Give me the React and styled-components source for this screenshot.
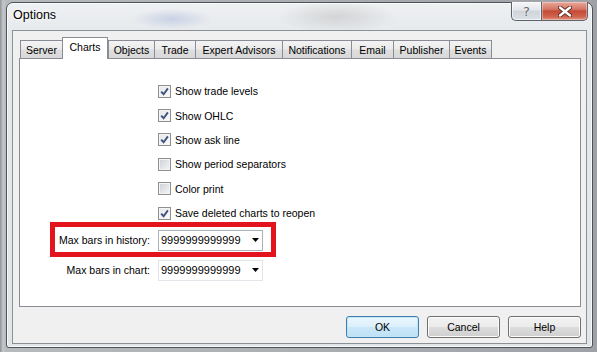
import React from "react";
import styled, { createGlobalStyle } from "styled-components";

const tabs = [
  { label: "Server", w: 42 },
  { label: "Charts", w: 46, active: true },
  { label: "Objects", w: 46 },
  { label: "Trade", w: 41 },
  { label: "Expert Advisors", w: 87 },
  { label: "Notifications", w: 69 },
  { label: "Email", w: 42 },
  { label: "Publisher", w: 56 },
  { label: "Events", w: 43, last: true },
];

const options = [
  { label: "Show trade levels", checked: true },
  { label: "Show OHLC", checked: true },
  { label: "Show ask line", checked: true },
  { label: "Show period separators", checked: false },
  { label: "Color print", checked: false },
  { label: "Save deleted charts to reopen", checked: true },
];

const limits = [
  { label: "Max bars in history:", value: "9999999999999", active: true },
  { label: "Max bars in chart:", value: "9999999999999" },
];

export default function App() {
  return (
    <>
      <GlobalStyle />
      <Window>
        <TitleBar>
          <Title>Options</Title>
          <Caption>
            <HelpBtn>?</HelpBtn>
            <CloseBtn>
              <svg width="14" height="11" viewBox="0 0 14 11">
                <path
                  d="M2 1.5 L12 9.5 M12 1.5 L2 9.5"
                  stroke="#5a2a22"
                  strokeWidth="4.2"
                  strokeLinecap="round"
                />
                <path
                  d="M2 1.5 L12 9.5 M12 1.5 L2 9.5"
                  stroke="#fff"
                  strokeWidth="2.4"
                  strokeLinecap="round"
                />
              </svg>
            </CloseBtn>
          </Caption>
        </TitleBar>

        <Client>
          <TabRow>
            {tabs.map((t) => (
              <Tab key={t.label} $w={t.w} $active={t.active} $last={t.last}>
                {t.label}
              </Tab>
            ))}
          </TabRow>

          <Panel>
            <Checks>
              {options.map((o) => (
                <CheckRow key={o.label}>
                  <Box $checked={o.checked}>
                    {o.checked && (
                      <svg width="9" height="9" viewBox="0 0 9 9">
                        <path
                          d="M1.2 4.6 L3.6 7.2 L7.9 1.4"
                          fill="none"
                          stroke="#40507f"
                          strokeWidth="1.9"
                        />
                      </svg>
                    )}
                  </Box>
                  <span>{o.label}</span>
                </CheckRow>
              ))}
            </Checks>

            {limits.map((l) => (
              <FormRow key={l.label}>
                <FieldLabel>{l.label}</FieldLabel>
                <Combo $active={l.active}>
                  <span>{l.value}</span>
                  <svg width="7" height="4" viewBox="0 0 7 4">
                    <polygon points="0,0 7,0 3.5,4" fill="#000" />
                  </svg>
                </Combo>
              </FormRow>
            ))}

            <Highlight />
          </Panel>

          <Buttons>
            <Button $default>OK</Button>
            <Button>Cancel</Button>
            <Button>Help</Button>
          </Buttons>
        </Client>
      </Window>
    </>
  );
}

/* ---------------- styled-components ---------------- */

const BORDER = "#898c95";
const FONT = `"Liberation Sans", Arial, sans-serif`;
const TEXT = "10.5px";

const GlobalStyle = createGlobalStyle`
  html, body {
    margin: 0;
    padding: 0;
  }
  body {
    width: 597px;
    height: 352px;
    overflow: hidden;
    font-family: ${FONT};
    background: linear-gradient(90deg, #8e9297 0, #c4c7ca 3px, #b7babd 6px, #9ea2a6 100%);
  }
`;

const Window = styled.div`
  margin: 2px 0 0 6px;
  width: 587px;
  height: 346px;
  box-sizing: border-box;
  border: 1px solid #4f5357;
  border-radius: 7px 7px 3px 3px;
  padding: 0 5px 3px;
  display: flex;
  flex-direction: column;
  background:
    radial-gradient(ellipse 40px 10px at 165px 16px, #c8d2e6 0%, transparent 100%),
    radial-gradient(ellipse 60px 16px at 330px 14px, #d2d4d6 0%, transparent 100%),
    linear-gradient(180deg, #eef0f2 0, #e6e9ec 30px, #e2e5e8 100%);
  box-shadow: inset 0 0 0 1px rgba(255, 255, 255, 0.75);
`;

const TitleBar = styled.div`
  height: 27px;
  display: flex;
  justify-content: space-between;
  align-items: flex-start;
`;

const Title = styled.div`
  padding: 5px 0 0 1px;
  font-size: 12.5px;
  line-height: 15px;
  color: #000;
  text-shadow: 0 0 6px #fff, 0 0 3px #fff;
`;

const Caption = styled.div`
  display: flex;
  margin-right: -1px;
  margin-top: -1px;
`;

const CaptionBtn = styled.div`
  height: 19px;
  box-sizing: border-box;
  border: 1px solid #5d636a;
  border-top: none;
  display: grid;
  place-items: center;
`;

const HelpBtn = styled(CaptionBtn)`
  width: 30px;
  border-right: none;
  border-radius: 0 0 0 5px;
  font-family: "DejaVu Sans", sans-serif;
  font-size: 13px;
  color: #62676d;
  text-shadow: 0 0 2px #fff;
  background: linear-gradient(180deg, #f5f6f8 0%, #e3e6ea 45%, #cfd4da 50%, #dce1e6 100%);
  box-shadow: inset 0 0 0 1px rgba(255, 255, 255, 0.6);
`;

const CloseBtn = styled(CaptionBtn)`
  width: 47px;
  border-radius: 0 0 5px 0;
  background: linear-gradient(180deg, #e8a79a 0%, #d67867 40%, #c44a37 50%, #cf624d 80%, #e0917c 100%);
  box-shadow: inset 0 0 0 1px rgba(255, 255, 255, 0.35);
`;

const Client = styled.div`
  flex: 1;
  border: 1px solid #8c9196;
  background: #f0f0f0;
  padding: 6px 5px 0 6px;
  display: flex;
  flex-direction: column;
`;

const TabRow = styled.div`
  height: 21px;
  display: flex;
  align-items: flex-end;
  padding-left: 1px;
`;

const Tab = styled.div`
  position: relative;
  z-index: ${(p) => (p.$active ? 2 : 0)};
  width: ${(p) => p.$w}px;
  height: ${(p) => (p.$active ? 22 : 18)}px;
  margin-bottom: ${(p) => (p.$active ? -1 : 0)}px;
  box-sizing: border-box;
  border: 1px solid ${BORDER};
  border-bottom: none;
  border-right: ${(p) => (p.$active || p.$last ? `1px solid ${BORDER}` : "none")};
  padding-bottom: ${(p) => (p.$active ? 3 : 0)}px;
  display: flex;
  align-items: center;
  justify-content: center;
  font-size: ${TEXT};
  color: #000;
  white-space: nowrap;
  background: ${(p) =>
    p.$active
      ? "#fff"
      : "linear-gradient(180deg, #f3f3f3 0%, #ebebeb 45%, #dedede 55%, #d8d8d8 100%)"};
`;

const Panel = styled.div`
  position: relative;
  height: 249px;
  box-sizing: border-box;
  border: 1px solid ${BORDER};
  background: #fff;
  padding-top: 20px;
`;

const Checks = styled.div`
  padding-left: 138px;
  display: flex;
  flex-direction: column;
`;

const CheckRow = styled.label`
  height: 24.4px;
  display: flex;
  align-items: center;
  gap: 4px;
  font-size: ${TEXT};
  color: #000;
`;

const Box = styled.span`
  flex: none;
  width: 13px;
  height: 13px;
  box-sizing: border-box;
  border: 1px solid #8e8f8f;
  display: grid;
  place-items: center;
  box-shadow: inset 0 0 0 1px #f4f4f4;
  background: ${(p) =>
    p.$checked
      ? "linear-gradient(135deg, #e3e5e9 0%, #f6f6f6 70%, #fbfbfb 100%)"
      : "linear-gradient(135deg, #cbcfd5 0%, #e6e7e9 60%, #f3f3f3 100%)"};
`;

const FormRow = styled.div`
  height: 30px;
  display: flex;
  align-items: center;
`;

const FieldLabel = styled.div`
  width: 130px;
  margin-right: 8px;
  text-align: right;
  font-size: ${TEXT};
  color: #000;
`;

const Combo = styled.div`
  width: 105px;
  height: 21px;
  box-sizing: border-box;
  border: 1px solid ${(p) => (p.$active ? "#a9b1bb" : "#e2e5ea")};
  background: #fff;
  padding: 0 3px 0 2px;
  display: flex;
  align-items: center;
  justify-content: space-between;
  font-size: 11px;
  color: #000;
`;

const Highlight = styled.div`
  position: absolute;
  left: 30px;
  top: 163px;
  width: 226px;
  height: 35px;
  box-sizing: border-box;
  border: 5px solid #e3141d;
  pointer-events: none;
`;

const Buttons = styled.div`
  margin-top: 9px;
  display: flex;
  justify-content: flex-end;
  gap: 8px;
`;

const Button = styled.button`
  width: 73px;
  height: 22px;
  box-sizing: border-box;
  border: 1px solid ${(p) => (p.$default ? "#3c7fb1" : "#707070")};
  border-radius: 3px;
  padding: 0;
  font-family: ${FONT};
  font-size: ${TEXT};
  color: #000;
  box-shadow: inset 0 0 0 1px ${(p) => (p.$default ? "#c4e5f6" : "#fcfcfc")};
  background: ${(p) =>
    p.$default
      ? "linear-gradient(180deg, #eaf6fd 0%, #dcf0fb 50%, #c9e7f8 50%, #bfe1f5 100%)"
      : "linear-gradient(180deg, #f2f2f2 0%, #ebebeb 50%, #dddddd 50%, #cfcfcf 100%)"};
`;
